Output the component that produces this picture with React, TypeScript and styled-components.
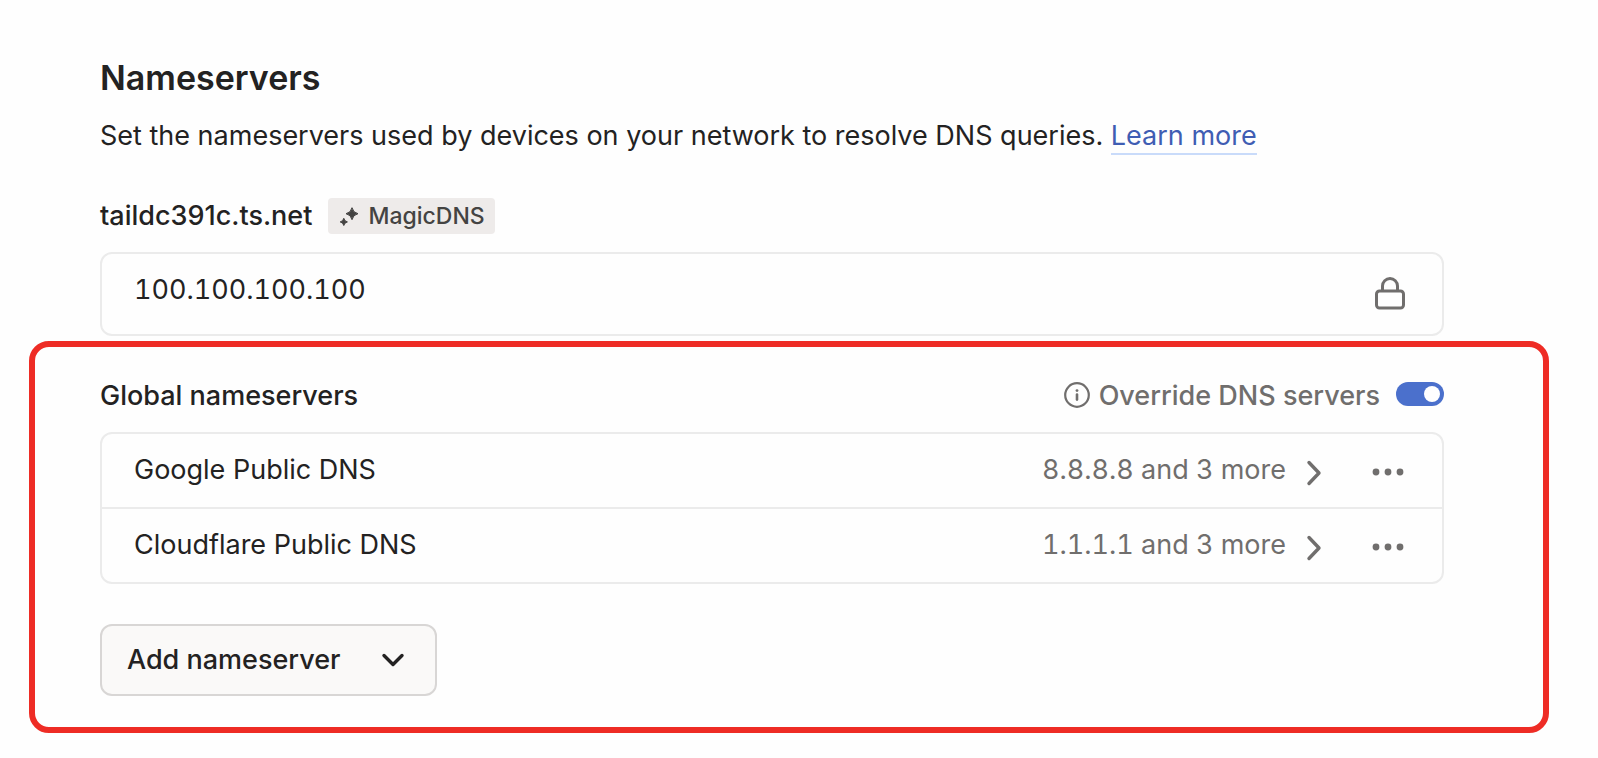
import { useState } from "react";
import styled, { createGlobalStyle } from "styled-components";

const GlobalStyle = createGlobalStyle`
  *, *::before, *::after { box-sizing: border-box; }
  body {
    margin: 0;
    background: #fefefe;
    color: #232222;
    font-family: Inter, "Liberation Sans", sans-serif;
    font-size: 27px;
    line-height: 40px;
  }
  button, input { font: inherit; color: inherit; }
`;

const Page = styled.main`
  padding: 56px 49px 25px 29px;
`;

const Intro = styled.section`
  padding: 0 105px 0 71px;
`;

const Title = styled.h1`
  margin: 0;
  font-size: 34px;
  line-height: 44px;
  font-weight: 600;
`;

const Description = styled.p`
  margin: 16px 0 0;
`;

const TextLink = styled.a`
  padding-bottom: 1px;
  color: #3f5db3;
  text-decoration: none;
  border-bottom: 2px solid #c9dbfa;
`;

const DomainRow = styled.div`
  display: flex;
  align-items: center;
  gap: 16px;
  height: 36px;
  margin-top: 42px;
`;

const Subheading = styled.h2`
  margin: 0;
  font-size: 27px;
  line-height: 40px;
  font-weight: 500;
`;

const Badge = styled.span`
  display: inline-flex;
  align-items: center;
  gap: 6px;
  padding: 0 10px;
  border-radius: 4px;
  background: #eeebea;
  color: #444342;
  font-size: 23px;
  line-height: 36px;
  font-weight: 500;
`;

const Panel = styled.div`
  border: 2px solid #ebebeb;
  border-radius: 12px;
`;

const LockedAddress = styled(Panel)`
  display: flex;
  justify-content: space-between;
  align-items: center;
  margin-top: 18px;
  padding: 16px 35px 24px 32px;
  font-variant-numeric: tabular-nums;
`;

const LockSlot = styled.span`
  display: flex;
  height: 40px;
  align-items: flex-end;
  color: #706e6d;
`;

const Highlight = styled.section`
  margin-top: 5px;
  padding: 29px 99px 31px 65px;
  border: 6px solid #ee2c25;
  border-radius: 20px;
`;

const SectionHeader = styled.div`
  display: flex;
  justify-content: space-between;
  align-items: center;
`;

const Override = styled.div`
  display: flex;
  align-items: center;
  gap: 8px;
  color: #706e6d;
  font-weight: 500;
`;

const Switch = styled.input`
  appearance: none;
  flex: none;
  width: 48px;
  height: 24px;
  margin: 0 0 4px 8px;
  padding: 4px;
  display: flex;
  justify-content: ${(p) => (p.checked ? "flex-end" : "flex-start")};
  border-radius: 12px;
  background: ${(p) => (p.checked ? "#4b70cc" : "#c4c2c1")};
  cursor: pointer;

  &::before {
    content: "";
    width: 16px;
    height: 16px;
    border-radius: 50%;
    background: #fff;
  }
`;

const List = styled(Panel).attrs({ as: "ul" })`
  margin: 16px 0 0;
  padding: 0;
  list-style: none;
`;

const Row = styled.li`
  display: flex;
  align-items: center;
  padding: 16px 38px 17px 32px;

  & + & {
    border-top: 2px solid #ebebeb;
  }
`;

const RowName = styled.span`
  flex: 1;
`;

const PlainButton = styled.button`
  display: flex;
  align-items: center;
  padding: 0;
  border: 0;
  background: none;
  color: #706e6d;
  cursor: pointer;
`;

const Expand = styled(PlainButton)`
  gap: 20px;
  margin-right: 50px;
  font-variant-numeric: tabular-nums;
`;

const AddButton = styled.button`
  display: flex;
  align-items: center;
  gap: 40px;
  margin-top: 40px;
  padding: 14px 30px 14px 25px;
  border: 2px solid #d8d6d5;
  border-radius: 12px;
  background: #faf9f8;
  font-weight: 500;
  cursor: pointer;
`;

const SparkleIcon = () => (
  <svg width="24" height="24" viewBox="0 0 24 24" fill="currentColor" stroke="currentColor" strokeWidth="1" strokeLinejoin="round" aria-hidden="true">
    <path d="M14 3.7 Q15 8.7 20 9.7 Q15 10.7 14 15.7 Q13 10.7 8 9.7 Q13 8.7 14 3.7 Z" />
    <path d="M5.8 14.3 Q6.4 17.3 9.4 17.9 Q6.4 18.5 5.8 21.5 Q5.2 18.5 2.2 17.9 Q5.2 17.3 5.8 14.3 Z" />
  </svg>
);

const LockIcon = () => (
  <svg width="34" height="34" viewBox="0 0 34 34" fill="none" stroke="currentColor" strokeWidth="3" strokeLinejoin="round" aria-hidden="true">
    <rect x="3.5" y="15" width="27" height="17" rx="3" />
    <path d="M9.5 15 V10 a7.5 7.5 0 0 1 15 0 V15" />
  </svg>
);

const InfoIcon = () => (
  <svg width="28" height="28" viewBox="0 0 28 28" fill="none" stroke="currentColor" aria-hidden="true">
    <circle cx="14" cy="13" r="11.8" strokeWidth="2.2" />
    <path d="M14 12.6 V17.6" strokeWidth="2.6" strokeLinecap="round" />
    <circle cx="14" cy="8.6" r="1.4" fill="currentColor" stroke="none" />
  </svg>
);

const ChevronRight = () => (
  <svg width="16" height="34" viewBox="0 0 16 34" fill="none" stroke="currentColor" strokeWidth="3.4" strokeLinecap="round" strokeLinejoin="round" aria-hidden="true">
    <path d="M3 9.5 L13 20 L3 30.5" />
  </svg>
);

const ChevronDown = () => (
  <svg width="24" height="14" viewBox="0 0 24 14" fill="none" stroke="currentColor" strokeWidth="3.4" strokeLinecap="round" strokeLinejoin="round" aria-hidden="true">
    <path d="M3 2.5 L12 11.5 L21 2.5" />
  </svg>
);

const DotsIcon = () => (
  <svg width="32" height="14" viewBox="0 0 32 14" fill="currentColor" aria-hidden="true">
    <circle cx="4" cy="9" r="3.4" />
    <circle cx="16" cy="9" r="3.4" />
    <circle cx="28" cy="9" r="3.4" />
  </svg>
);

const nameservers = [
  { name: "Google Public DNS", summary: "8.8.8.8 and 3 more" },
  { name: "Cloudflare Public DNS", summary: "1.1.1.1 and 3 more" },
];

export default function App() {
  const [override, setOverride] = useState(true);

  return (
    <>
      <GlobalStyle />
      <Page>
        <Intro>
          <Title>Nameservers</Title>
          <Description>
            Set the nameservers used by devices on your network to resolve DNS queries.{" "}
            <TextLink href="#learn-more">Learn more</TextLink>
          </Description>
          <DomainRow>
            <Subheading>taildc391c.ts.net</Subheading>
            <Badge>
              <SparkleIcon />
              MagicDNS
            </Badge>
          </DomainRow>
          <LockedAddress>
            <span>100.100.100.100</span>
            <LockSlot>
              <LockIcon />
            </LockSlot>
          </LockedAddress>
        </Intro>

        <Highlight>
          <SectionHeader>
            <Subheading>Global nameservers</Subheading>
            <Override>
              <InfoIcon />
              <label htmlFor="override-dns">Override DNS servers</label>
              <Switch
                id="override-dns"
                type="checkbox"
                role="switch"
                checked={override}
                onChange={(e) => setOverride(e.target.checked)}
              />
            </Override>
          </SectionHeader>
          <List>
            {nameservers.map((ns) => (
              <Row key={ns.name}>
                <RowName>{ns.name}</RowName>
                <Expand type="button">
                  {ns.summary}
                  <ChevronRight />
                </Expand>
                <PlainButton type="button" aria-label={`Options for ${ns.name}`}>
                  <DotsIcon />
                </PlainButton>
              </Row>
            ))}
          </List>
          <AddButton type="button">
            Add nameserver
            <ChevronDown />
          </AddButton>
        </Highlight>
      </Page>
    </>
  );
}
